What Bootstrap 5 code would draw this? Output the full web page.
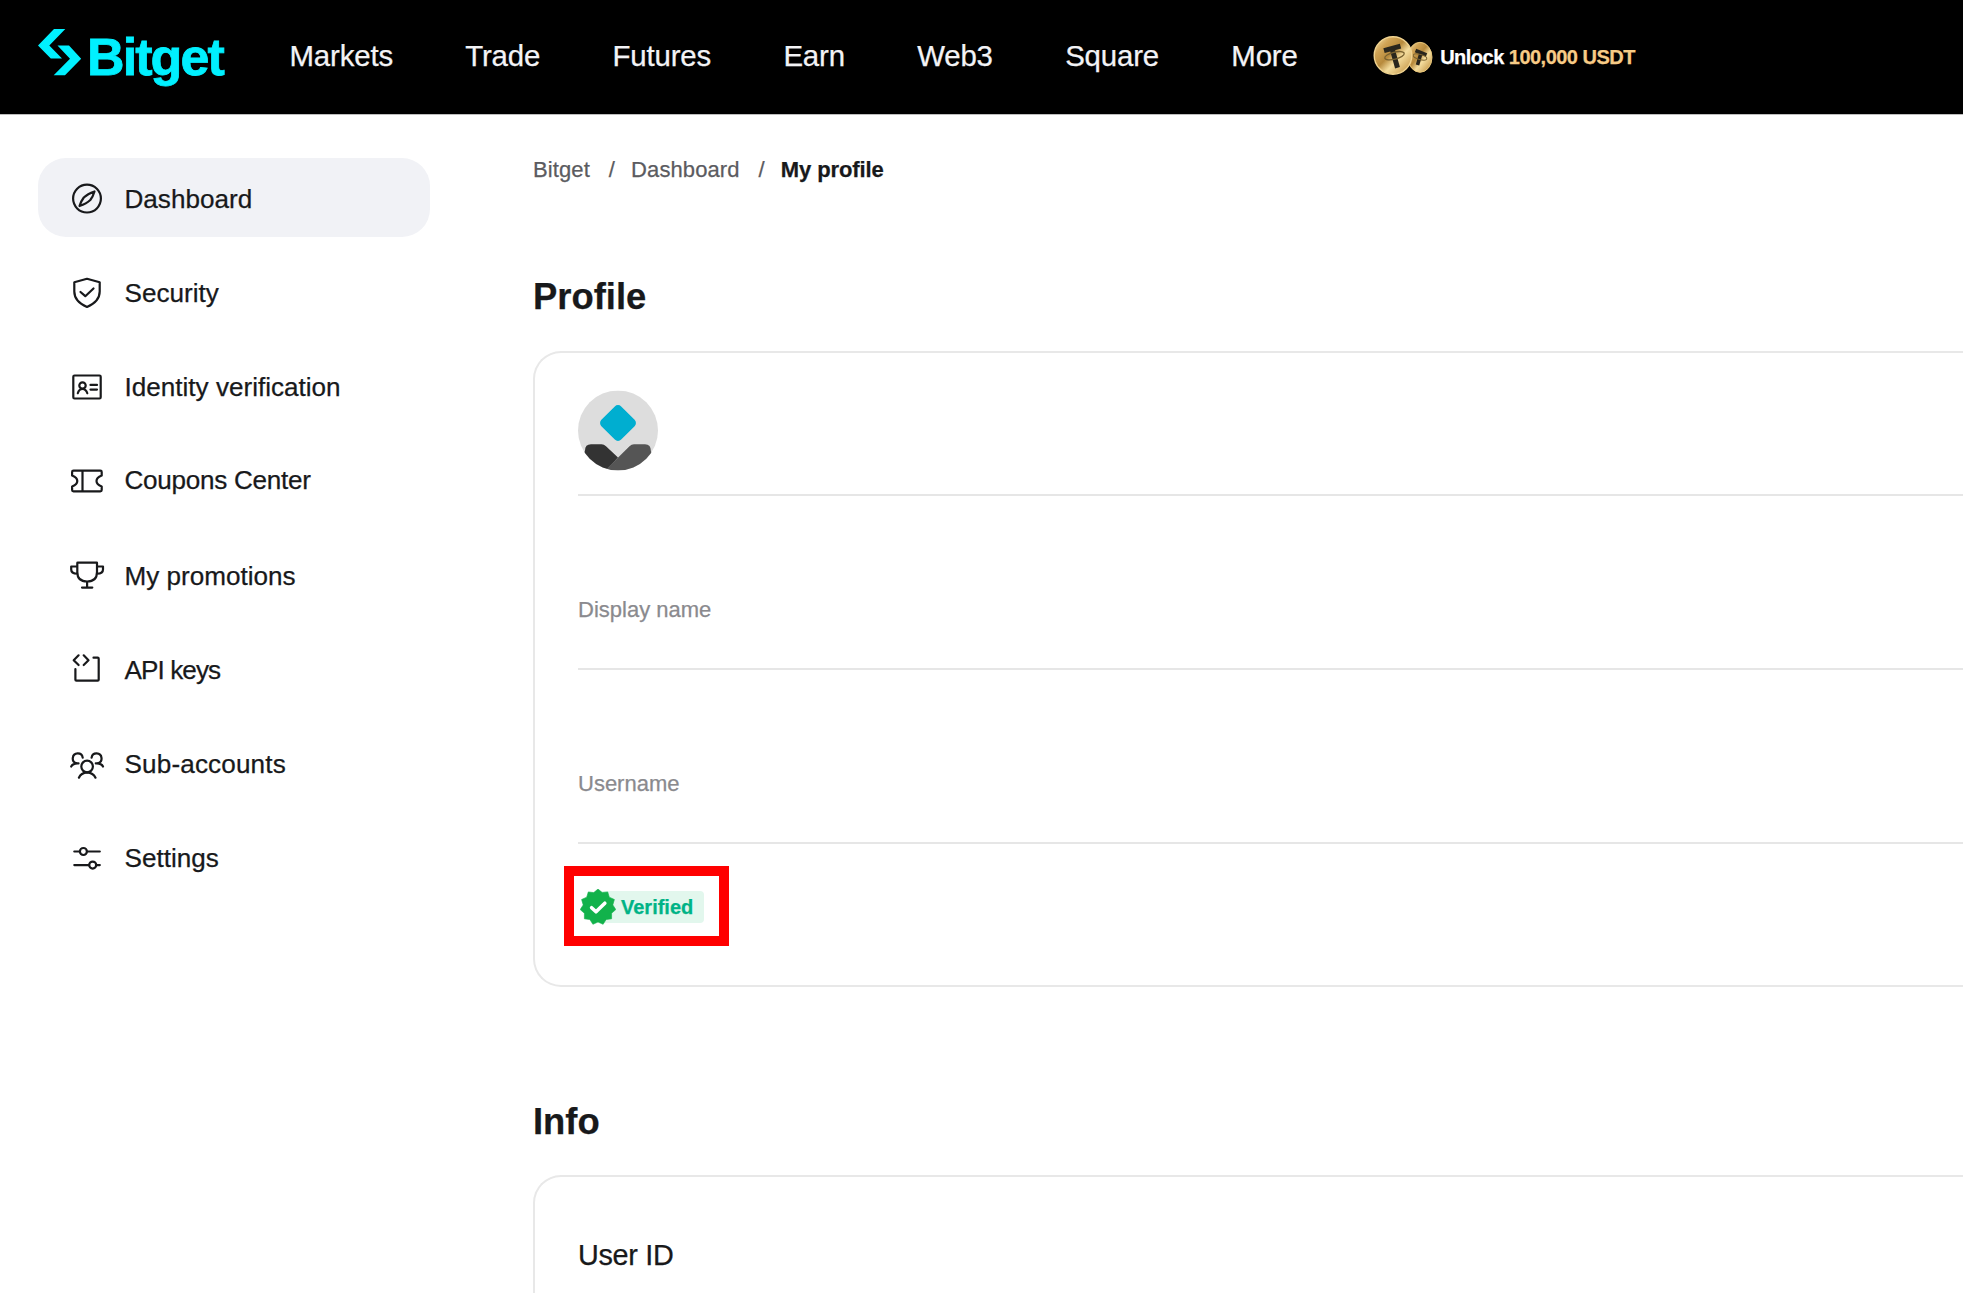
<!DOCTYPE html>
<html lang="en">
<head>
<meta charset="utf-8">
<meta name="viewport" content="width=device-width, initial-scale=1">
<title>My profile | Bitget</title>
<link href="https://cdn.jsdelivr.net/npm/bootstrap@5.3.0/dist/css/bootstrap.min.css" rel="stylesheet">
<style>
body{font-family:"Liberation Sans",Arial,sans-serif;color:#18191b;height:100vh;background:#fff;-webkit-text-stroke:.25px currentColor}
.topbar{height:115px;background:#000;border-bottom:1px solid #bdbdbd;padding:0 0 0 38px}
.brand-mark{margin-bottom:10px}
.brand-word{font-size:52px;font-weight:700;letter-spacing:-1.9px;line-height:60px;color:#00f0ff;-webkit-text-stroke:.8px #00f0ff;width:137px;margin-left:3px}
.topnav{gap:72.3px;margin-left:65.500px;padding-bottom:2px}
.topnav .nav-link{font-size:29.4px;letter-spacing:-.15px;line-height:36px;color:#f3f3f6;padding:0}
.promo{font-size:20px;font-weight:700;letter-spacing:-.52px;color:#fff;line-height:26px;margin-left:75.500px;gap:7px;white-space:nowrap}
.promo .gold{color:#f7cb86}
.shell{height:calc(100vh - 115px)}
.side{width:391.500px;margin-left:38px;padding-top:43px;gap:15.2px}
.side .nav-link{height:79px;border-radius:28px;padding:0 0 0 29px;color:#18191b;font-size:26.1px;line-height:32px;gap:17.500px}
.side .nav-link.active{background:#f1f2f6;color:#18191b}
.side .nav-link span{padding-top:3px}
.side .snug{letter-spacing:-.28px}
.side .tight{letter-spacing:-.9px}
.side .loose{letter-spacing:.15px}
.side svg{width:40px;height:40px;flex:none;fill:none;stroke:#18191b;stroke-width:2.2;stroke-linejoin:round;stroke-linecap:round}
.content-col{margin-left:103.500px;padding-top:40px}
.crumbs{font-size:22px;line-height:30px;color:#5b5b60;letter-spacing:.1px;white-space:nowrap}
.crumbs b{color:#18191b;letter-spacing:-.12px}
.crumb-sep{margin:0 16px 0 19px}
.sect-title{font-size:36.4px;font-weight:700;line-height:44px;margin:90px 0 32px}
.info-title{margin:113px 0 31px}
.panel{border:2px solid #e8e8e8;border-right:0;border-radius:28px 0 0 28px;padding-left:43px}
.profile-panel{height:636px}
.info-panel{border-bottom:0;border-radius:28px 0 0 0;padding-top:60px;font-size:28.8px;letter-spacing:-.3px;line-height:36px}
.line-row{border-bottom:2px solid #e6e6e6}
.avatar-row{height:143px;padding-top:37px}
.field-row{height:174px;padding-top:99px;font-size:22px;line-height:30px;color:#8a8a8e}
.mark-box{width:165px;height:80px;border:10px solid #f00;margin:22px 0 0 -14.500px;padding:1px 0 0 6px}
.verified{color:#00b386;font-size:20px;font-weight:700;line-height:32px;height:32px;width:106px;background:#e2f7ed;border-radius:4px;margin-left:-18px;padding-left:23.500px}
.mark-box svg{position:relative;z-index:1;flex:none}
</style>
</head>
<body class="overflow-hidden">
<header class="topbar d-flex align-items-center">
  <a class="d-flex align-items-center text-decoration-none" href="#">
    <svg class="brand-mark flex-shrink-0" width="46" height="47" viewBox="0 0 46 47" fill="#00f0ff"><path d="M16 0H27.3L11.3 16.4L24 29.6H12.8L0 16.4ZM19.5 16.6H31L43.2 29.7L27 46.3H15.7L32 29.7Z"/></svg>
    <span class="brand-word flex-shrink-0">Bitget</span>
  </a>
  <nav class="nav topnav flex-nowrap">
    <a class="nav-link" href="#">Markets</a><a class="nav-link" href="#">Trade</a><a class="nav-link" href="#">Futures</a><a class="nav-link" href="#">Earn</a><a class="nav-link" href="#">Web3</a><a class="nav-link" href="#">Square</a><a class="nav-link" href="#">More</a>
  </nav>
  <div class="promo d-flex align-items-center">
    <svg width="60" height="42" viewBox="0 0 60 42">
      <defs><linearGradient id="coin" x1="0" y1="0" x2="1" y2="1"><stop offset="0" stop-color="#f8e8b4"/><stop offset=".25" stop-color="#d0a354"/><stop offset=".45" stop-color="#b78a3c"/><stop offset=".62" stop-color="#f4dd9e"/><stop offset="1" stop-color="#b88532"/></linearGradient></defs>
      <ellipse cx="47" cy="21.300" rx="12" ry="15" fill="url(#coin)" stroke="#e8c67a"/>
      <g fill="none" stroke="#29261d"><path stroke-width="3.6" d="M42.500 14.500L53.500 19M48 17L44.500 29"/><ellipse cx="47" cy="21" rx="7" ry="2.500" stroke="#79612f" transform="rotate(15 47 21)"/></g>
      <circle cx="20" cy="19.500" r="18.800" fill="url(#coin)" stroke="#f0d390" stroke-width="1.400"/>
      <g fill="none" stroke="#29261d"><path stroke-width="5" d="M11 14.700L27.500 10.200M19 12.200L24.500 31.700"/><ellipse cx="21.500" cy="19.700" rx="10" ry="3.500" stroke="#79612f" stroke-width="1.300" transform="rotate(-14 21.500 19.700)"/></g>
    </svg>
    <span>Unlock <span class="gold">100,000 USDT</span></span>
  </div>
</header>
<div class="shell d-flex">
  <nav class="side nav nav-pills flex-column flex-nowrap flex-shrink-0">
    <a class="nav-link active d-flex align-items-center" href="#"><svg viewBox="0 0 40 40"><circle cx="20" cy="20.600" r="13.900"/><path d="M12.500 28Q13.800 23.500 16.800 19.500Q20.500 16 27.500 13.500Q26 18.500 23.300 22Q19.500 25.700 12.500 28Z"/></svg><span>Dashboard</span></a>
    <a class="nav-link d-flex align-items-center" href="#"><svg viewBox="0 0 40 40"><path d="M20 6.800L32.700 10.300V19.500C32.700 27 28 31.500 20 35C12 31.500 7.300 27 7.300 19.500V10.300ZM13.500 20L18.300 24.200L26.500 16.500"/></svg><span>Security</span></a>
    <a class="nav-link d-flex align-items-center" href="#"><svg viewBox="0 0 40 40"><rect x="6.300" y="9.500" width="27.400" height="23" rx="1.200"/><circle cx="15.500" cy="19.500" r="3.200"/><path d="M10.800 27.300Q12 23 15.500 23Q19 23 20.300 27.300M23.500 18.900H30M23.500 23.600H30"/></svg><span>Identity verification</span></a>
    <a class="nav-link d-flex align-items-center" href="#"><svg viewBox="0 0 40 40"><path d="M6.500 10.700H33.300Q34.700 10.700 34.700 12V15.500Q29.500 17.500 29.500 21Q29.500 24.500 34.700 26.500V30Q34.700 31.300 33.300 31.300H6.500Q5.100 31.300 5.100 30V26.500Q10.300 24.500 10.300 21Q10.300 17.500 5.100 15.500V12Q5.100 10.700 6.500 10.700ZM15.500 10.700V31.300"/></svg><span class="snug pt-0">Coupons Center</span></a>
    <a class="nav-link d-flex align-items-center" href="#"><svg viewBox="0 0 40 40"><path d="M10.300 9Q10.300 8.700 10.700 8.700H29.700Q30 8.700 30 9V18Q30 27.500 20.100 27.500Q10.300 27.500 10.300 18ZM20.100 27.500V33.600M15 33.600H25.300M10.300 12.500H4.200V15.500Q4.200 19.700 10.300 19.700M30 12.500H36V15.500Q36 19.700 30 19.700"/></svg><span>My promotions</span></a>
    <a class="nav-link d-flex align-items-center" href="#"><svg viewBox="0 0 40 40"><path d="M11.600 7.300L6.700 12.200L11.600 17M16.700 7.300L21.500 12.200L16.700 17M26.500 9.700H30.700Q31.700 9.700 31.700 10.700V31.700Q31.700 32.700 30.700 32.700H9.400Q8.400 32.700 8.400 31.700V21"/></svg><span class="tight">API keys</span></a>
    <a class="nav-link d-flex align-items-center" href="#"><svg viewBox="0 0 40 40"><circle cx="20.100" cy="23.500" r="5.800"/><path d="M11.900 34.700Q14 29.800 20.100 29.300Q26.200 29.800 28.500 34.700M15.700 14.600A5 5 0 1 0 9.500 20.300M4.200 23.500Q6 20 11.500 20.400M24.600 14.600A5 5 0 1 1 30.800 20.300M36 23.500Q34.300 20 28.800 20.400"/></svg><span class="loose">Sub-accounts</span></a>
    <a class="nav-link d-flex align-items-center" href="#"><svg viewBox="0 0 40 40"><path d="M7.300 14.500H12.800M20 14.500H32.800M7.300 28.100H22M29.300 28.100H32.800"/><circle cx="16.400" cy="14.500" r="3.500"/><circle cx="25.700" cy="28.100" r="3.500"/></svg><span>Settings</span></a>
  </nav>
  <main class="content-col flex-grow-1 d-flex flex-column">
    <div class="crumbs d-flex"><span>Bitget</span><span class="crumb-sep">/</span><span>Dashboard</span><span class="crumb-sep">/</span><b>My profile</b></div>
    <h2 class="sect-title">Profile</h2>
    <section class="panel profile-panel flex-shrink-0">
      <div class="line-row avatar-row">
        <svg class="d-block" width="80" height="81" viewBox="0 -.5 80 81"><defs><clipPath id="disc"><circle cx="40" cy="40" r="40"/></clipPath></defs><g clip-path="url(#disc)"><path fill="#ddd" d="M0 0H80V80H0Z"/><rect x="26" y="18.500" width="28" height="28" rx="4.500" fill="#00aed0" transform="rotate(45 40 32.500)"/><path fill="#333" d="M13 53.700H23.500Q26 53.700 28 55.700L40 67L28 80H0L7 60Q7 53.700 13 53.700Z"/><path fill="#555" d="M67 53.700H56Q53.500 53.700 51.500 55.700L29 78V80H80L73 61Q73 53.700 67 53.700Z"/></g></svg>
      </div>
      <div class="line-row field-row">Display name</div>
      <div class="line-row field-row">Username</div>
      <div class="mark-box d-flex align-items-center">
        <svg width="36" height="36" viewBox="0 0 36 36"><path fill="#12b24b" stroke="#12b24b" stroke-width=".6" stroke-linejoin="round" d="M18 0L22.200 3.600L27.700 2.900L29.300 8.200L34.400 10.500L32.800 15.900L35.800 20.600L31.600 24.200L31.600 29.800L26.100 30.600L23.100 35.300L18 33L12.900 35.300L9.900 30.600L4.400 29.800L4.400 24.200L.2 20.600L3.200 15.900L1.600 10.500L6.700 8.200L8.300 2.900L13.800 3.600Z"/><path d="M11.600 18.700L16 22.800L24.800 14.200" fill="none" stroke="#fff" stroke-width="3.600" stroke-linecap="round" stroke-linejoin="round"/></svg>
        <span class="verified">Verified</span>
      </div>
    </section>
    <h2 class="sect-title info-title">Info</h2>
    <section class="panel info-panel flex-grow-1">User ID</section>
  </main>
</div>
<script src="https://cdn.jsdelivr.net/npm/bootstrap@5.3.0/dist/js/bootstrap.bundle.min.js"></script>
</body>
</html>
